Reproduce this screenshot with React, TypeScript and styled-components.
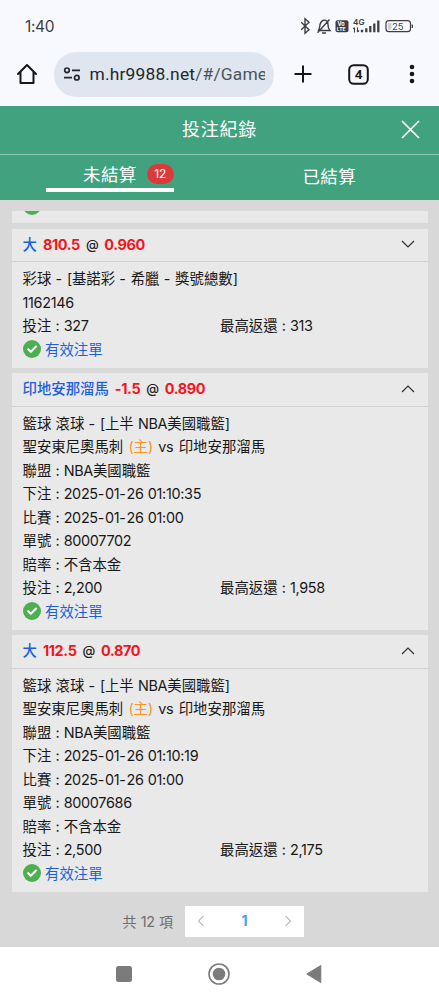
import React from 'react';
import styled, { createGlobalStyle } from 'styled-components';

const cjk = '"Noto Sans CJK TC", sans-serif';

const GlobalStyle = createGlobalStyle`
  * { box-sizing: border-box; }
  body { margin: 0; background: #d8d8d8; font-family: ${cjk}; color: #181818; }
`;

const Screen = styled.div`
  width: 439px;
  height: 1000px;
  display: flex;
  flex-direction: column;
  overflow: hidden;
`;

const StatusBar = styled.div`
  height: 52px;
  flex: none;
  display: flex;
  align-items: center;
  justify-content: space-between;
  padding: 0 25px 0 25px;
  background: #f8f9fe;
`;

const Clock = styled.span`
  font: 400 15.5px/20px Inter, sans-serif;
  letter-spacing: -0.35px;
  color: #3c3d42;
  padding-top: 1px;
`;

const StatusIcons = styled.svg`
  width: 115px;
  height: 20px;
  display: block;
`;

const BrowserBar = styled.div`
  height: 54px;
  flex: none;
  display: flex;
  align-items: center;
  padding: 0 0 10px 16px;
  background: #f8f9fe;
`;

const AddressPill = styled.div`
  width: 219.5px;
  height: 45px;
  margin-left: 16px;
  padding: 0 8px 0 9px;
  display: flex;
  align-items: center;
  border-radius: 23px;
  background: #dfe6ef;
`;

const Address = styled.div`
  width: 175px;
  margin-left: 8.5px;
  overflow: hidden;
  white-space: nowrap;
  font: 400 17.4px/24px Roboto, sans-serif;
  letter-spacing: 0.18px;
  color: #23272c;
`;

const AddressPath = styled.span`
  color: #4b545e;
`;

const BarIcon = styled.svg<{ $gap?: number }>`
  display: block;
  flex: none;
  margin-left: ${p => p.$gap ?? 0}px;
`;

const Header = styled.header`
  height: 94px;
  flex: none;
  background: #40a27f;
  color: #fff;
`;

const TitleRow = styled.div`
  height: 49px;
  display: grid;
  grid-template-columns: 60px 1fr 60px;
  align-items: center;
  justify-items: center;
  border-bottom: 1px solid #8cc7b2;
`;

const Title = styled.h1`
  grid-column: 2;
  margin: 0;
  font-size: 18px;
  line-height: 26px;
  font-weight: 400;
  letter-spacing: 0.8px;
  padding-bottom: 4px;
`;

const CloseButton = styled.button`
  border: 0;
  padding: 0;
  margin: 0 0 1px 2px;
  background: none;
  display: block;
  svg { display: block; }
`;

const Tabs = styled.nav`
  display: grid;
  grid-template-columns: 1fr 1fr;
  height: 45px;
`;

const Tab = styled.div<{ $active?: boolean }>`
  width: 128px;
  height: ${p => (p.$active ? 37 : 44)}px;
  justify-self: center;
  display: flex;
  align-items: center;
  justify-content: ${p => (p.$active ? 'flex-end' : 'center')};
  gap: 10px;
  padding: ${p => (p.$active ? '4px 0 0' : '0 0 3px')};
  border-bottom: ${p => (p.$active ? '4px solid #fff' : '0')};
  font-size: 17.5px;
  line-height: 26px;
  letter-spacing: 0.4px;
`;

const Count = styled.span`
  width: 27px;
  height: 20px;
  border-radius: 10px;
  background: #dc3a3a;
  font: 400 12px/20px Inter, sans-serif;
  text-align: center;
  letter-spacing: 0;
`;

const List = styled.main`
  flex: 1;
  padding: 11px 11px 0 11.5px;
`;

const ClippedCard = styled.section`
  height: 12px;
  margin-bottom: 5.7px;
  padding-left: 11px;
  overflow: hidden;
  background: #e9e9e9;
  svg { display: block; margin-top: -14.5px; }
`;

const Card = styled.section`
  margin-bottom: 5.3px;
  background: #e9e9e9;
`;

const CardHead = styled.div`
  height: 33.4px;
  display: flex;
  align-items: center;
  justify-content: space-between;
  padding: 0 13px 1.6px 11px;
  border-bottom: 1px solid #d2d2d2;
`;

const Odds = styled.div`
  display: flex;
  align-items: baseline;
  gap: 6px;
  font-size: 14.4px;
  line-height: 24px;
  white-space: nowrap;
`;

const Pick = styled.span`
  color: #1b5fe0;
  font-weight: 500;
`;

const Figure = styled.span`
  font-family: Inter, sans-serif;
  font-weight: 700;
  font-size: 14.4px;
  color: #f5141c;
  letter-spacing: -0.35px;
`;

const At = styled(Figure)`
  font-weight: 500;
  font-size: 13px;
  color: #202020;
  transform: translateY(-1px);
`;

const CardBody = styled.div`
  padding: 4.7px 11px 7.1px;
`;

const Line = styled.div`
  height: 23.5px;
  display: flex;
  align-items: center;
  font-size: 14.4px;
  line-height: 23.5px;
  white-space: pre;
`;

const Half = styled.div`
  width: 197.5px;
  flex: none;
`;

const Latin = styled.span<{ $space: number }>`
  font-family: Inter, sans-serif;
  font-size: 14.4px;
  letter-spacing: -0.3px;
  word-spacing: ${p => p.$space}px;
`;

const Dash = styled.span`
  letter-spacing: 0.5px;
`;

const Home = styled.span`
  color: #f9941e;
`;

const Valid = styled.span`
  color: #1b5fe0;
  margin-left: 4.5px;
`;

const Pager = styled.div`
  height: 31px;
  margin-top: 14px;
  padding-left: 111px;
  display: flex;
  align-items: center;
  gap: 12px;
`;

const Total = styled.span`
  font-size: 14px;
  line-height: 20px;
  color: #6e6e70;
  white-space: pre;
`;

const Pages = styled.div`
  width: 119px;
  height: 31px;
  padding: 0 12px;
  display: flex;
  align-items: center;
  justify-content: space-between;
  background: #fff;
`;

const Current = styled.span`
  font: 700 14px/20px Inter, sans-serif;
  color: #409eff;
`;

const NavBar = styled.footer`
  height: 53px;
  flex: none;
  display: flex;
  align-items: center;
  justify-content: center;
  padding-right: 1px;
  gap: 76px;
  background: #fff;
  svg { display: block; }
`;

/* Latin runs use a different family from the Chinese text around them. */
function Mixed({ text, space = 0.5 }: { text: string; space?: number }) {
  return (
    <span>
      {text.split(/([\x20-\x7e]+)/).map((run, i) =>
        i % 2 ? (
          <Latin key={i} $space={space}>
            {run.split(/(-)/).map((part, j) => (part === '-' ? <Dash key={j}>-</Dash> : part))}
          </Latin>
        ) : run,
      )}
    </span>
  );
}

function CheckIcon() {
  return (
    <svg width="18" height="18" viewBox="0 0 18 18">
      <circle cx="9" cy="9" r="9" fill="#4caf50" />
      <path d="M5.2 9.2 7.9 11.8 13 6.6" fill="none" stroke="#fff" strokeWidth="2.1" strokeLinecap="round" strokeLinejoin="round" />
    </svg>
  );
}

function Chevron({ open }: { open: boolean }) {
  return (
    <svg width="14" height="8" viewBox="0 0 14 8">
      <path d={open ? 'M1 7 7 1l6 6' : 'M1 1l6 6 6-6'} fill="none" stroke="#2b2b2b" strokeWidth="1.1" />
    </svg>
  );
}

interface Bet {
  pick: string;
  line: string;
  odds: string;
  open: boolean;
  lines: string[];
  teams?: [string, string];
  stake: string;
  payout: string;
}

const bets: Bet[] = [
  {
    pick: '大', line: '810.5', odds: '0.960', open: false,
    lines: ['彩球 - [基諾彩 - 希臘 - 獎號總數]', '1162146'],
    stake: '327', payout: '313',
  },
  {
    pick: '印地安那溜馬', line: '-1.5', odds: '0.890', open: true,
    teams: ['聖安東尼奧馬刺', '印地安那溜馬'],
    lines: ['籃球 滾球 - [上半 NBA美國職籃]', '聯盟 : NBA美國職籃', '下注 : 2025-01-26 01:10:35', '比賽 : 2025-01-26 01:00', '單號 : 80007702', '賠率 : 不含本金'],
    stake: '2,200', payout: '1,958',
  },
  {
    pick: '大', line: '112.5', odds: '0.870', open: true,
    teams: ['聖安東尼奧馬刺', '印地安那溜馬'],
    lines: ['籃球 滾球 - [上半 NBA美國職籃]', '聯盟 : NBA美國職籃', '下注 : 2025-01-26 01:10:19', '比賽 : 2025-01-26 01:00', '單號 : 80007686', '賠率 : 不含本金'],
    stake: '2,500', payout: '2,175',
  },
];

function BetCard({ bet }: { bet: Bet }) {
  const [first, ...rest] = bet.lines;
  return (
    <Card>
      <CardHead>
        <Odds>
          <Pick>{bet.pick}</Pick>
          <Figure>{bet.line}</Figure>
          <At>@</At>
          <Figure>{bet.odds}</Figure>
        </Odds>
        <Chevron open={bet.open} />
      </CardHead>
      <CardBody>
        <Line><Mixed text={first} /></Line>
        {bet.teams && (
          <Line>
            <Mixed text={bet.teams[0] + ' '} space={1.6} />
            <Home><Mixed text="(主)" /></Home>
            <Mixed text={' vs ' + bet.teams[1]} space={1.6} />
          </Line>
        )}
        {rest.map(text => <Line key={text}><Mixed text={text} /></Line>)}
        <Line>
          <Half><Mixed text={'投注 : ' + bet.stake} /></Half>
          <Mixed text={'最高返還 : ' + bet.payout} />
        </Line>
        <Line><CheckIcon /><Valid>有效注單</Valid></Line>
      </CardBody>
    </Card>
  );
}

export default function App() {
  return (
    <Screen>
      <GlobalStyle />
      <StatusBar>
        <Clock>1:40</Clock>
        <StatusIcons viewBox="0 0 115 20" fill="none" stroke="#3e3f45" strokeWidth="1.4">
          <path d="M2.2 6.2 10 13.8 6 17.2V2.8L10 6.2 2.2 13.8" />
          <path d="M19 14.5c2-1.7 1.5-4 2.1-6.2C21.8 5.8 23 4.5 24.7 4.2c2.8-.3 4.3 1.9 4.3 4.3 0 3 .3 4.5 1.9 6H19M18.5 16.8 30.5 3.5M23 17h4" />
          <rect x="36.5" y="4.2" width="13" height="12" rx="2" fill="#3e3f45" stroke="none" />
          <g stroke="none" fontFamily="Inter, sans-serif" fontWeight="700">
            <text x="38.5" y="9.8" fontSize="5.5" fill="#fff">Vo</text>
            <text x="37.8" y="15" fontSize="5" fill="#fff">LTE</text>
            <text x="54" y="8.6" fontSize="8.2" fontWeight="600" fill="#3e3f45">4G</text>
            <text x="93" y="13.7" fontSize="9.5" fontWeight="400" fill="#3e3f45">25</text>
          </g>
          <path d="M55.5 11.5v5M54.2 13l1.3-1.5M58.5 11.5v4.5M60 14.5 58.5 16" strokeWidth="1.1" />
          <path d="M63 16.3v-2.5M67.3 16.3v-4M71.3 16.3V10M75.3 16.3V7.5M79.3 16.3V4.5" strokeWidth="2.3" />
          <rect x="87" y="4.7" width="24.5" height="11" rx="3" strokeWidth="1.2" />
          <path d="M89 7h3.5v6.5H89z" fill="#cfd0d6" stroke="none" />
          <path d="M113.3 8.5v3.5" strokeWidth="1.3" />
        </StatusIcons>
      </StatusBar>
      <BrowserBar>
        <BarIcon width="22" height="22" viewBox="0 0 22 22" fill="none" stroke="#16171b" strokeWidth="2" strokeLinejoin="round" strokeLinecap="round">
          <path d="M2 11 11 2l9 9M4.5 9v11h13V9" />
        </BarIcon>
        <AddressPill>
          <BarIcon width="18" height="14" viewBox="0 0 18 14" fill="none" stroke="#23272c" strokeWidth="1.7">
            <circle cx="4" cy="3.3" r="2.3" />
            <path d="M9 3.3h8M1 10.7h8" />
            <circle cx="13.8" cy="10.7" r="2.3" />
          </BarIcon>
          <Address>m.hr9988.net<AddressPath>/#/Game</AddressPath></Address>
        </AddressPill>
        <BarIcon $gap={20.5} width="18" height="18" viewBox="0 0 18 18" stroke="#16171b" strokeWidth="2">
          <path d="M9 .5v17M.5 9h17" />
        </BarIcon>
        <BarIcon $gap={36} width="21" height="21" viewBox="0 0 21 21" fill="none" stroke="#16171b" strokeWidth="2">
          <rect x="1.2" y="1.2" width="18.6" height="18.6" rx="4.5" />
          <text x="10.5" y="15.2" textAnchor="middle" fontFamily="Roboto, sans-serif" fontWeight="700" fontSize="13.5" fill="#16171b" stroke="none">4</text>
        </BarIcon>
        <BarIcon $gap={40} width="6" height="20" viewBox="0 0 6 20" fill="#16171b">
          <circle cx="3" cy="3" r="2.3" />
          <circle cx="3" cy="10" r="2.3" />
          <circle cx="3" cy="17" r="2.3" />
        </BarIcon>
      </BrowserBar>
      <Header>
        <TitleRow>
          <Title>投注紀錄</Title>
          <CloseButton aria-label="關閉">
            <svg width="19" height="19" viewBox="0 0 19 19" stroke="#fff" strokeWidth="1.7">
              <path d="M1 1l17 17M18 1 1 18" />
            </svg>
          </CloseButton>
        </TitleRow>
        <Tabs>
          <Tab $active>未結算<Count>12</Count></Tab>
          <Tab>已結算</Tab>
        </Tabs>
      </Header>
      <List>
        <ClippedCard><CheckIcon /></ClippedCard>
        {bets.map(bet => <BetCard key={bet.pick + bet.line} bet={bet} />)}
        <Pager>
          <Total><Mixed text="共 12 項" /></Total>
          <Pages>
            <svg width="8" height="12" viewBox="0 0 8 12" fill="none" stroke="#b9bcc2" strokeWidth="1.1"><path d="M6.5 1 1.5 6l5 5" /></svg>
            <Current>1</Current>
            <svg width="8" height="12" viewBox="0 0 8 12" fill="none" stroke="#b9bcc2" strokeWidth="1.1"><path d="M1.5 1l5 5-5 5" /></svg>
          </Pages>
        </Pager>
      </List>
      <NavBar>
        <svg width="16" height="16"><rect width="16" height="16" rx="2.5" fill="#7b7b7b" /></svg>
        <svg width="22" height="22" viewBox="0 0 22 22">
          <circle cx="11" cy="11" r="10" fill="none" stroke="#7b7b7b" strokeWidth="1.6" />
          <circle cx="11" cy="11" r="6.3" fill="#7b7b7b" />
        </svg>
        <svg width="16" height="20" viewBox="0 0 16 20"><path d="M.8 10 14.8 1.5v17z" fill="#7b7b7b" stroke="#7b7b7b" strokeLinejoin="round" /></svg>
      </NavBar>
    </Screen>
  );
}
